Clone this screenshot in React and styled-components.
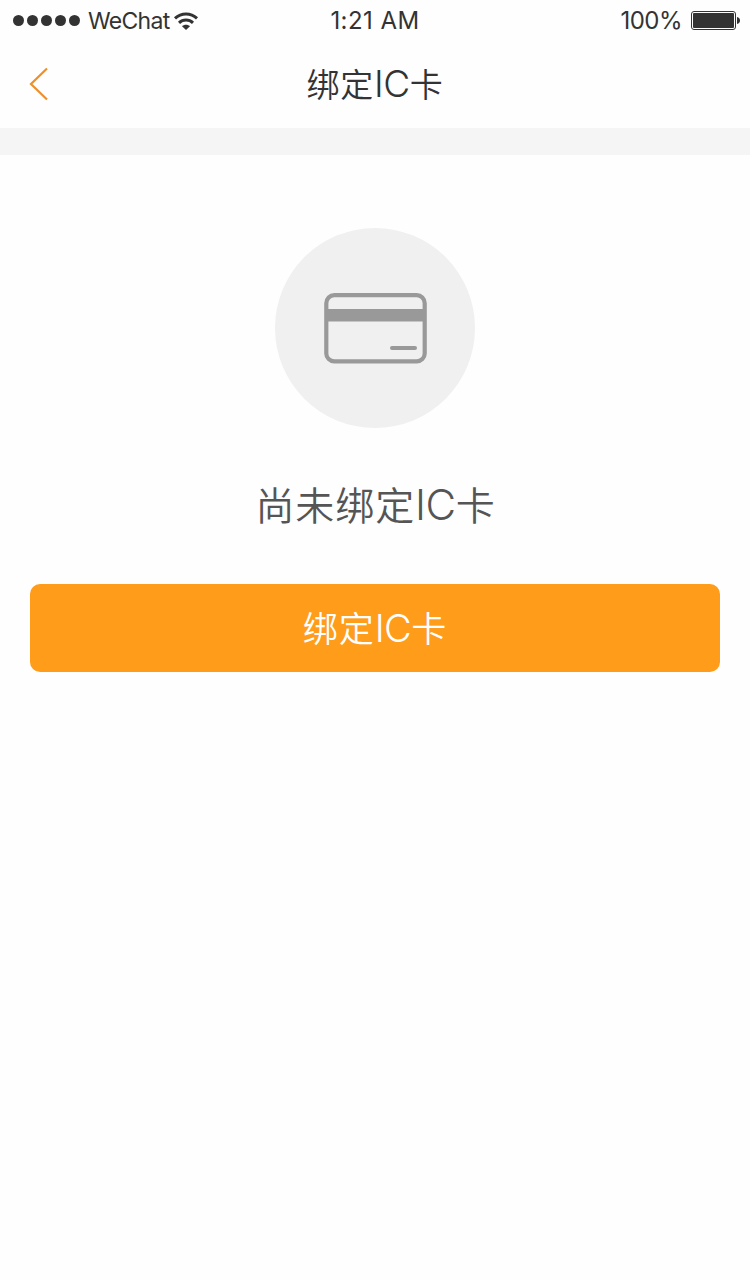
import React from "react";
import styled, { createGlobalStyle } from "styled-components";

const App = () => {
    return (
        <Page>
            <GlobalStyle />
            <StatusBar>
                <Carrier>
                    <Signal>
                        {[0, 1, 2, 3, 4].map((i) => <Dot key={i} />)}
                    </Signal>
                    <StatusText size="23px" spacing="-0.7px" offset="2px">WeChat</StatusText>
                    <WifiIcon viewBox="0 0 26 20">
                        <path d="M2 7.4C8.3 1.6 17.7 1.6 24 7.4" />
                        <path d="M6 11.8C10 8 16 8 20 11.8" />
                        <path d="M9 15.2C11.2 13.2 14.8 13.2 17 15.2L13 19Z" className="fill" />
                    </WifiIcon>
                </Carrier>
                <StatusText size="24px" spacing="0.45px">1:21 AM</StatusText>
                <Power>
                    <StatusText size="24px" spacing="-0.5px">100%</StatusText>
                    <BatteryIcon viewBox="0 0 50 20">
                        <rect x="0.5" y="0.5" width="44" height="18" rx="2.5" fill="none" stroke="#333" />
                        <rect x="2" y="2" width="41" height="15" rx="1" fill="#333" />
                        <path d="M46 6C50 6.5 50 12.5 46 13Z" fill="#333" />
                    </BatteryIcon>
                </Power>
            </StatusBar>
            <NavBar>
                <BackButton aria-label="返回">
                    <svg width="20" height="34" viewBox="0 0 20 34">
                        <path d="M18 1.5L2 17L18 32.5" fill="none" stroke="#ee8f2a" strokeWidth="2.2" />
                    </svg>
                </BackButton>
                <Title>绑定<Latin size="37px">IC</Latin>卡</Title>
            </NavBar>
            <Divider />
            <Content>
                <CardCircle>
                    <svg width="104" height="72" viewBox="0 0 104 72">
                        <rect x="3.3" y="3.2" width="98.4" height="66.2" rx="8" fill="none" stroke="#999" strokeWidth="4.2" />
                        <rect x="3" y="17" width="98" height="12.5" fill="#999" />
                        <path d="M69 56H92" stroke="#999" strokeWidth="4" strokeLinecap="round" />
                    </svg>
                </CardCircle>
                <Message>尚未绑定<Latin size="42px">IC</Latin>卡</Message>
                <BindButton>绑定<Latin size="38px">IC</Latin>卡</BindButton>
            </Content>
        </Page>
    )
}

const GlobalStyle = createGlobalStyle`
    body {
        margin: 0;
        background: #fefefe;
    }
    * {
        box-sizing: border-box;
    }
`

const Page = styled.div`
    min-height: 1280px;
    background: #fefefe;
    color: #333;
    font-family: Inter, "Noto Sans CJK SC", sans-serif;
    font-weight: 350;
`

const StatusBar = styled.div`
    display: grid;
    grid-template-columns: 1fr auto 1fr;
    align-items: center;
    height: 40px;
    padding: 1px 9px 0;
`

const Carrier = styled.div`
    display: flex;
    align-items: center;
    height: 39px;
    padding-left: 4px;
`

const Signal = styled.div`
    display: flex;
    gap: 3px;
    margin-right: 8px;
`

const Dot = styled.span`
    width: 11px;
    height: 11px;
    border-radius: 50%;
    background: #333;
`

const StatusText = styled.span`
    padding-top: ${(props) => props.offset || 0};
    font-size: ${(props) => props.size};
    letter-spacing: ${(props) => props.spacing};
    font-weight: 400;
    line-height: 39px;
    white-space: nowrap;
`

const WifiIcon = styled.svg`
    width: 26px;
    height: 20px;
    margin-left: 3px;
    fill: none;
    stroke: #333;
    stroke-width: 3;

    .fill {
        fill: #333;
        stroke: none;
    }
`

const Power = styled.div`
    display: flex;
    align-items: center;
    justify-content: flex-end;
    gap: 9px;
`

const BatteryIcon = styled.svg`
    width: 50px;
    height: 20px;
`

const NavBar = styled.div`
    display: grid;
    grid-template-columns: 90px 1fr 90px;
    align-items: center;
    height: 88px;
`

const BackButton = styled.button`
    display: flex;
    border: 0;
    padding: 0 0 0 29px;
    background: none;
`

const Latin = styled.span`
    font-size: ${(props) => props.size};
    font-weight: 300;
    line-height: 1;
    letter-spacing: -0.5px;
`

const Title = styled.div`
    padding-top: 2px;
    font-size: 33px;
    line-height: 86px;
    letter-spacing: 0.8px;
    text-align: center;
`

const Divider = styled.div`
    height: 27px;
    background: #f5f5f5;
`

const Content = styled.div`
    display: flex;
    flex-direction: column;
    align-items: center;
    padding: 73px 30px 0;
`

const CardCircle = styled.div`
    display: flex;
    align-items: center;
    justify-content: center;
    width: 200px;
    height: 200px;
    border-radius: 50%;
    background: #f0f0f0;
`

const Message = styled.div`
    margin-top: 48px;
    padding-left: 1px;
    color: #555;
    font-size: 39px;
    line-height: 60px;
    letter-spacing: 0.9px;
`

const BindButton = styled.button`
    width: 100%;
    height: 88px;
    margin-top: 48px;
    border: 0;
    border-radius: 10px;
    padding: 0 0 3px;
    background: #ff9c1a;
    color: #fff;
    font-family: inherit;
    font-size: 35px;
    font-weight: 350;
    letter-spacing: 0.9px;
`

export default App
